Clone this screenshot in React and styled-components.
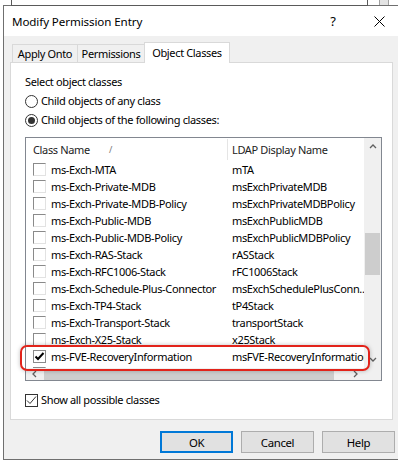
import React from "react";
import styled, { createGlobalStyle } from "styled-components";

const GlobalStyle = createGlobalStyle`
  html, body {
    margin: 0;
    padding: 0;
    background: #fff;
  }
  body {
    font-family: "Noto Sans", "Liberation Sans", sans-serif;
    font-size: 11px;
    letter-spacing: -0.35px;
    color: #000;
  }
  * {
    box-sizing: border-box;
  }
`;

// the last row is only a sliver above the scrollbar
const classes = [
  ["ms-Exch-MTA", "mTA"],
  ["ms-Exch-Private-MDB", "msExchPrivateMDB"],
  ["ms-Exch-Private-MDB-Policy", "msExchPrivateMDBPolicy"],
  ["ms-Exch-Public-MDB", "msExchPublicMDB"],
  ["ms-Exch-Public-MDB-Policy", "msExchPublicMDBPolicy"],
  ["ms-Exch-RAS-Stack", "rASStack"],
  ["ms-Exch-RFC1006-Stack", "rFC1006Stack"],
  ["ms-Exch-Schedule-Plus-Connector", "msExchSchedulePlusConn..."],
  ["ms-Exch-TP4-Stack", "tP4Stack"],
  ["ms-Exch-Transport-Stack", "transportStack"],
  ["ms-Exch-X25-Stack", "x25Stack"],
  ["ms-FVE-RecoveryInformation", "msFVE-RecoveryInformation", true],
  ["", ""],
];

const Screen = styled.div`
  width: 398px;
  height: 460px;
  overflow: hidden;
  background: #fff;
`;

const Backdrop = styled.div`
  display: flex;
  height: 5px;
`;

const BehindWindow = styled.div`
  margin-left: 11px;
  width: 357px;
  height: 6px;
  border: 1px solid #5a5a5a;
  border-top: none;
`;

const BehindScroll = styled.div`
  margin-left: 11px;
  width: 10px;
  height: 5px;
  background: #e3e3e3;
  border-left: 1px solid #a0a0a0;
  border-right: 1px solid #a0a0a0;
`;

const Dialog = styled.div`
  margin-left: 3px;
  width: 400px;
  height: 455px;
  border: 1px solid #6f6f6f;
  background: #f0f0f0;
  display: flex;
  flex-direction: column;
`;

const TitleBar = styled.div`
  height: 30px;
  background: #fff;
  display: flex;
  align-items: center;
  padding-left: 8px;
`;

const Title = styled.div`
  flex: 1;
  font-size: 11.6px;
  letter-spacing: -0.1px;
`;

const CaptionButton = styled.div`
  width: 46px;
  height: 30px;
  display: flex;
  align-items: center;
  justify-content: center;
  font-size: 13px;
`;

const Body = styled.div`
  flex: 1;
  padding: 6px 7px 0 6px;
  display: flex;
  flex-direction: column;
`;

const TabStrip = styled.div`
  display: flex;
  align-items: flex-end;
  height: 20px;
  margin-left: 2px;
`;

const Tab = styled.div`
  position: relative;
  z-index: 1;
  width: ${(p) => p.$width}px;
  height: ${(p) => (p.$active ? 21 : 18)}px;
  margin-bottom: ${(p) => (p.$active ? -1 : 0)}px;
  margin-left: ${(p) => (p.$first ? 0 : -1)}px;
  display: flex;
  align-items: center;
  justify-content: center;
  padding-bottom: ${(p) => (p.$active ? 2 : 0)}px;
  background: ${(p) => (p.$active ? "#fff" : "#f0f0f0")};
  border: 1px solid #d9d9d9;
  border-bottom: none;
  white-space: nowrap;
`;

const Panel = styled.div`
  height: 358px;
  margin-right: 2px;
  background: #fff;
  border: 1px solid #d9d9d9;
  padding: 11px 0 0 14px;
  display: flex;
  flex-direction: column;
`;

const SectionLabel = styled.div`
  line-height: 16px;
`;

const OptionRow = styled.div`
  display: flex;
  align-items: center;
  gap: 3px;
  height: 16px;
  margin-top: ${(p) => p.$gap}px;
  line-height: 16px;
`;

const RadioCircle = styled.span`
  width: 13px;
  height: 13px;
  border: 1px solid #333;
  border-radius: 50%;
  display: flex;
  align-items: center;
  justify-content: center;
  flex-shrink: 0;
`;

const RadioDot = styled.span`
  width: 7px;
  height: 7px;
  border-radius: 50%;
  background: #333;
`;

const ListFrame = styled.div`
  position: relative;
  margin-top: 9px;
  width: 357px;
  height: 244px;
  border: 1px solid #828790;
  background: #fff;
  display: grid;
  grid-template-columns: 1fr 17px;
  grid-template-rows: 1fr 12px;
`;

const ListBody = styled.div`
  overflow: hidden;
`;

const HeaderRow = styled.div`
  height: 23px;
  display: flex;
  align-items: center;
  color: #222;
`;

const HeaderCell = styled.div`
  width: ${(p) => p.$width}px;
  height: 21px;
  display: flex;
  align-items: center;
  padding-left: ${(p) => p.$pad}px;
  border-right: ${(p) => (p.$divider ? "1px solid #e5e5e5" : "none")};
  white-space: nowrap;
`;

const SortMark = styled.span`
  margin-left: 19px;
  color: #777;
  font-size: 9px;
`;

const Row = styled.div`
  height: 17px;
  display: flex;
  align-items: center;
  white-space: nowrap;
`;

const NameCell = styled.div`
  width: 202px;
  display: flex;
  align-items: center;
  gap: 5px;
  padding-left: 7px;
`;

const LdapCell = styled.div`
  padding-left: 4px;
  width: 136px;
  overflow: hidden;
`;

const ListBox = styled.span`
  width: 13px;
  height: 13px;
  flex-shrink: 0;
  display: flex;
  align-items: center;
  justify-content: center;
  background: #fff;
  border: 1px solid ${(p) => (p.$checked ? "#8a8a8a" : "#e2e2e2")};
  border-top-color: #8a8a8a;
  border-left-color: #8a8a8a;
`;

const WinBox = styled.span`
  width: 13px;
  height: 13px;
  flex-shrink: 0;
  display: flex;
  align-items: center;
  justify-content: center;
  border: 1px solid #333;
  background: #fff;
`;

const VScroll = styled.div`
  background: #f0f0f0;
  display: flex;
  flex-direction: column;
`;

const HScroll = styled.div`
  background: #f0f0f0;
  display: flex;
  align-items: stretch;
`;

const Corner = styled.div`
  background: #f0f0f0;
`;

const Arrow = styled.div`
  width: 17px;
  height: ${(p) => (p.$horizontal ? "100%" : "17px")};
  display: flex;
  align-items: center;
  justify-content: center;
  flex-shrink: 0;
`;

const Track = styled.div`
  flex: 1;
  display: flex;
  flex-direction: ${(p) => (p.$horizontal ? "row" : "column")};
  align-items: ${(p) => (p.$horizontal ? "stretch" : "center")};
`;

const Thumb = styled.div`
  background: #cdcdcd;
  ${(p) =>
    p.$horizontal
      ? `margin-left: ${p.$offset}px; width: ${p.$size}px; margin-top: 1px;`
      : `margin-top: ${p.$offset}px; height: ${p.$size}px; width: 15px;`}
`;

const Highlight = styled.div`
  position: absolute;
  left: -6px;
  top: 207px;
  width: 350px;
  height: 26px;
  border: 2px solid #e2231a;
  border-radius: 7px;
  box-shadow: 0 0 4px rgba(0, 0, 0, 0.25);
  pointer-events: none;
`;

const ButtonRow = styled.div`
  display: flex;
  justify-content: flex-end;
  gap: 8px;
  margin-top: 11px;
`;

const Button = styled.div`
  width: 73px;
  height: 22px;
  display: flex;
  align-items: center;
  justify-content: center;
  font-size: 11.4px;
  background: #e1e1e1;
  border: 1px solid ${(p) => (p.$default ? "#0078d7" : "#adadad")};
  box-shadow: ${(p) => (p.$default ? "inset 0 0 0 1px #0078d7" : "none")};
`;

const Chevron = ({ dir }) => {
  const pts = {
    up: "1,5 4,2 7,5",
    down: "1,2 4,5 7,2",
    left: "5,1 2,4 5,7",
    right: "2,1 5,4 2,7",
  }[dir];
  return (
    <svg width="8" height="8" viewBox="0 0 8 8">
      <polyline points={pts} fill="none" stroke="#606060" strokeWidth="1.3" />
    </svg>
  );
};

const CheckMark = ({ bold }) => (
  <svg width="11" height="11" viewBox="0 0 11 11">
    <polyline
      points={bold ? "1.5,5.5 4,8 9.5,2" : "1,5.5 4,8.5 10,1.5"}
      fill="none"
      stroke={bold ? "#000" : "#333"}
      strokeWidth={bold ? 2 : 1}
    />
  </svg>
);

const CloseIcon = () => (
  <svg width="11" height="11" viewBox="0 0 11 11">
    <path d="M0.5 0.5 L10.5 10.5 M10.5 0.5 L0.5 10.5" stroke="#000" strokeWidth="1" />
  </svg>
);

const App = () => {
  return (
    <Screen>
      <GlobalStyle />
      <Backdrop>
        <BehindWindow />
        <BehindScroll />
      </Backdrop>
      <Dialog>
        <TitleBar>
          <Title>Modify Permission Entry</Title>
          <CaptionButton>?</CaptionButton>
          <CaptionButton>
            <CloseIcon />
          </CaptionButton>
        </TitleBar>
        <Body>
          <TabStrip>
            <Tab $first $width={66}>Apply Onto</Tab>
            <Tab $width={68}>Permissions</Tab>
            <Tab $active $width={86}>Object Classes</Tab>
          </TabStrip>
          <Panel>
            <SectionLabel>Select object classes</SectionLabel>
            <OptionRow $gap={3}>
              <RadioCircle />
              Child objects of any class
            </OptionRow>
            <OptionRow $gap={3}>
              <RadioCircle>
                <RadioDot />
              </RadioCircle>
              Child objects of the following classes:
            </OptionRow>
            <ListFrame>
              <ListBody>
                <HeaderRow>
                  <HeaderCell $width={202} $pad={7} $divider>
                    Class Name
                    <SortMark>/</SortMark>
                  </HeaderCell>
                  <HeaderCell $width={136} $pad={4}>
                    LDAP Display Name
                  </HeaderCell>
                </HeaderRow>
                {classes.map(([name, ldap, checked], i) => (
                  <Row key={i}>
                    <NameCell>
                      <ListBox $checked={checked}>{checked && <CheckMark bold />}</ListBox>
                      {name}
                    </NameCell>
                    <LdapCell>{ldap}</LdapCell>
                  </Row>
                ))}
              </ListBody>
              <VScroll>
                <Arrow>
                  <Chevron dir="up" />
                </Arrow>
                <Track>
                  <Thumb $offset={78} $size={42} />
                </Track>
                <Arrow>
                  <Chevron dir="down" />
                </Arrow>
              </VScroll>
              <HScroll>
                <Arrow $horizontal>
                  <Chevron dir="left" />
                </Arrow>
                <Track $horizontal>
                  <Thumb $horizontal $offset={1} $size={290} />
                </Track>
                <Arrow $horizontal>
                  <Chevron dir="right" />
                </Arrow>
              </HScroll>
              <Corner />
              <Highlight />
            </ListFrame>
            <OptionRow $gap={11}>
              <WinBox>
                <CheckMark />
              </WinBox>
              Show all possible classes
            </OptionRow>
          </Panel>
          <ButtonRow>
            <Button $default>OK</Button>
            <Button>Cancel</Button>
            <Button>Help</Button>
          </ButtonRow>
        </Body>
      </Dialog>
    </Screen>
  );
};

export default App;
